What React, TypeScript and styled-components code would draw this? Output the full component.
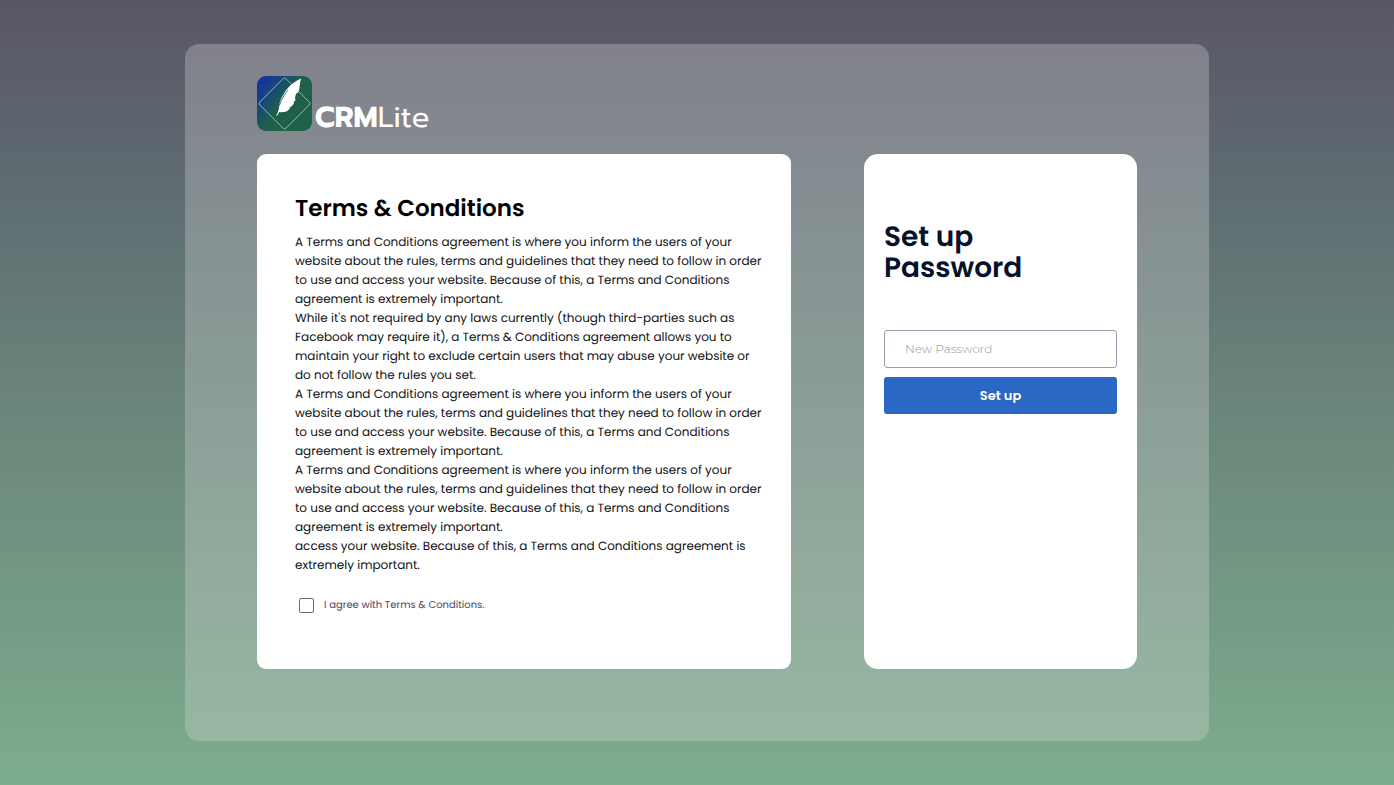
import React from "react";
import styled, { createGlobalStyle } from "styled-components";

const GlobalStyle = createGlobalStyle`
  *, *::before, *::after { box-sizing: border-box; }
  body {
    margin: 0;
    font-family: Poppins, Inter, sans-serif;
    text-rendering: geometricPrecision;
    color: #000;
  }
  h1, h2, p { margin: 0; }
`;

const Page = styled.div`
  display: flex;
  justify-content: center;
  min-height: 100vh;
  padding: 44px;
  background: linear-gradient(180deg, #5a5566 0%, #5f6d72 25%, #6c897c 56%, #7cad8d 100%);
`;

const Panel = styled.main`
  display: flex;
  flex-direction: column;
  gap: 23px;
  width: 100%;
  max-width: 1024px;
  padding: 32px 72px 72px;
  border-radius: 14px;
  background: rgba(217, 217, 217, 0.3);
`;

const Brand = styled.header`
  display: flex;
  align-items: flex-end;
  gap: 3px;
`;

const Mark = styled.svg`
  width: 55px;
  height: 55px;
`;

const BrandName = styled.span`
  font-family: Prompt, Lato, sans-serif;
  font-size: 29px;
  line-height: 26px;
  font-weight: 400;
  color: #fff;

  strong { font-weight: 700; }
`;

const Columns = styled.div`
  display: flex;
  flex: 1;
  gap: 73px;
`;

const TermsCard = styled.section`
  flex: 1;
  min-width: 0;
  padding: 37px 38px;
  border-radius: 9px;
  background: #fff;
`;

const TermsTitle = styled.h2`
  font-size: 23px;
  line-height: 36px;
  font-weight: 600;
`;

const TermsBody = styled.div`
  margin-top: 6px;
  font-size: 12px;
  line-height: 19px;
  color: #111;
`;

const Line = styled.span`
  display: block;
  white-space: nowrap;
`;

const Agree = styled.label`
  display: flex;
  align-items: center;
  gap: 10px;
  margin: 22px 4px 0;
  font-size: 10px;
  line-height: 16px;
  color: #4b4858;
`;

const Checkbox = styled.input`
  appearance: none;
  width: 15px;
  height: 15px;
  margin: 0;
  border: 1px solid #6b6880;
  border-radius: 2px;
  background: #fff;

  &:checked { background: #2b68c5; }
`;

const SetupCard = styled.form`
  display: flex;
  flex-direction: column;
  flex: 0 0 273px;
  padding: 67px 20px;
  border-radius: 14px;
  background: #fff;
`;

const SetupTitle = styled.h1`
  margin-bottom: 47px;
  font-size: 28px;
  line-height: 31px;
  font-weight: 600;
  color: #06122b;
`;

const PasswordInput = styled.input`
  height: 38px;
  padding: 0 20px 2px;
  border: 1px solid #9a9cae;
  border-radius: 3px;
  background: #fff;
  font-family: Montserrat, Inter, sans-serif;
  font-size: 12px;
  font-weight: 300;
  color: #06122b;

  &::placeholder { color: #8f91a3; opacity: 1; }
`;

const SubmitButton = styled.button`
  height: 37px;
  margin-top: 9px;
  padding: 0;
  border: 0;
  border-radius: 3px;
  background: #2b68c5;
  font-family: inherit;
  font-size: 13px;
  font-weight: 600;
  color: #fff;
  cursor: pointer;
`;

const agreement = [
  "A Terms and Conditions agreement is where you inform the users of your",
  "website about the rules, terms and guidelines that they need to follow in order",
  "to use and access your website. Because of this, a Terms and Conditions",
  "agreement is extremely important.",
];

const paragraphs = [
  agreement,
  [
    "While it's not required by any laws currently (though third-parties such as",
    "Facebook may require it), a Terms & Conditions agreement allows you to",
    "maintain your right to exclude certain users that may abuse your website or",
    "do not follow the rules you set.",
  ],
  agreement,
  agreement,
  [
    "access your website. Because of this, a Terms and Conditions agreement is",
    "extremely important.",
  ],
];

function Logo() {
  return (
    <Mark viewBox="0 0 55 55" aria-hidden="true">
      <defs>
        <linearGradient id="mark" x1="0" y1="0.1" x2="0.65" y2="0.6">
          <stop offset="0.1" stopColor="#14359a" />
          <stop offset="0.75" stopColor="#1e604a" />
        </linearGradient>
      </defs>
      <rect width="55" height="55" rx="9" fill="url(#mark)" />
      <rect
        x="9"
        y="9"
        width="37"
        height="37"
        rx="2"
        transform="rotate(45 27.5 27.5)"
        fill="none"
        stroke="#a9c3c4"
        strokeWidth="0.8"
      />
      <path
        d="M44 2.5C40 4.5 36 7 33 9.7C30 12.5 28 15.5 26.3 18.7C24 22.5 22.5 26 22 30L21.5 34L19.3 39.7L20 40L22.3 36C25 36.5 28 36 30 35.3L33 32.5L32.5 31.5C34.500 30.500 36 29 37 27L36.500 26L38.500 24.500C37.800 22 38 20 39 18.700L38.800 18L41 16.500C43 13 42.300 9 44 2.5Z"
        fill="#fff"
      />
      <path d="M20 37C22 28 25.500 21 31 14" fill="none" stroke="#1e5560" strokeWidth="0.8" />
    </Mark>
  );
}

export default function App() {
  return (
    <>
      <GlobalStyle />
      <Page>
        <Panel>
          <Brand>
            <Logo />
            <BrandName>
              <strong>CRM</strong>Lite
            </BrandName>
          </Brand>
          <Columns>
            <TermsCard>
              <TermsTitle>Terms &amp; Conditions</TermsTitle>
              <TermsBody>
                {paragraphs.map((lines, i) => (
                  <p key={i}>
                    {lines.map((line) => (
                      <Line key={line}>{line} </Line>
                    ))}
                  </p>
                ))}
              </TermsBody>
              <Agree>
                <Checkbox type="checkbox" />
                I agree with Terms &amp; Conditions.
              </Agree>
            </TermsCard>
            <SetupCard onSubmit={(e) => e.preventDefault()}>
              <SetupTitle>
                Set up
                <br />
                Password
              </SetupTitle>
              <PasswordInput type="password" placeholder="New Password" aria-label="New Password" />
              <SubmitButton type="submit">Set up</SubmitButton>
            </SetupCard>
          </Columns>
        </Panel>
      </Page>
    </>
  );
}
